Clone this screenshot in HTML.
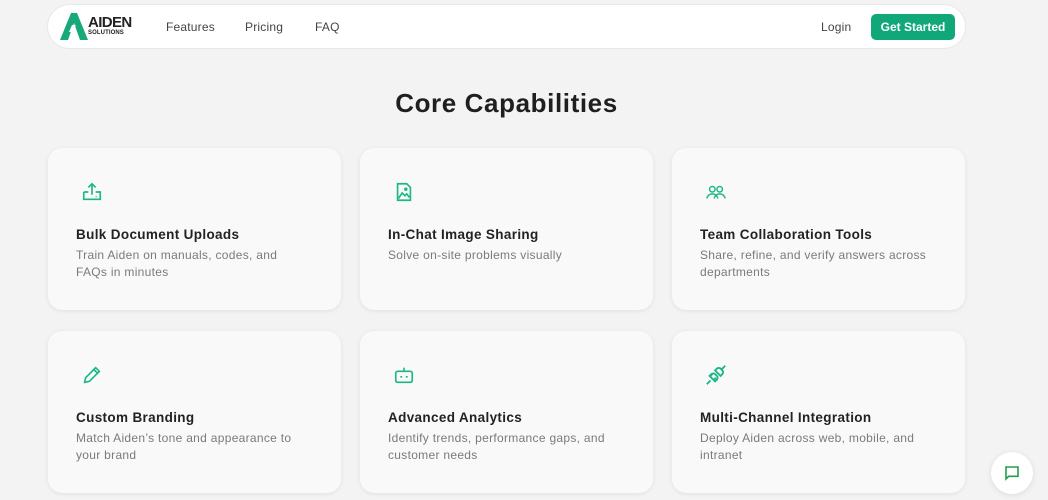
<!DOCTYPE html>
<html><head><meta charset="utf-8"><style>
*{margin:0;padding:0;box-sizing:border-box}
body{width:1048px;height:500px;overflow:hidden;background:#f3f3f3;font-family:"Liberation Sans",sans-serif;position:relative}
.nav{position:absolute;left:47px;top:4px;width:919px;height:45px;background:#fff;border-radius:23px;border:1px solid #e8e8e8}
.logo{position:absolute;left:11px;top:8px}
.lt{position:absolute;left:40px;top:10px;font-weight:bold;color:#222;line-height:1}
.lt b{display:block;font-size:15px;letter-spacing:-0.6px}
.lt i{display:block;font-style:normal;font-size:6px;margin-top:0px;letter-spacing:0.1px}
.nl{position:absolute;top:15px;font-size:12px;color:#444;letter-spacing:0.2px}
.btn{position:absolute;left:823px;top:9px;width:84px;height:26px;background:#10a878;border-radius:5px;color:#fff;font-size:12px;font-weight:bold;text-align:center;line-height:26px}
h1{position:absolute;top:88px;width:1013px;text-align:center;font-size:26px;font-weight:bold;color:#1f1f1f;letter-spacing:0.6px}
.card{position:absolute;width:293px;height:162px;background:#f9f9f9;border-radius:14px;box-shadow:0 1px 5px rgba(0,0,0,0.08)}
.card svg{position:absolute;left:33px;top:33px}
.card h3{position:absolute;left:28px;top:79px;font-size:13.5px;color:#222;font-weight:bold;letter-spacing:0.35px}
.card p{position:absolute;left:28px;top:99px;width:260px;font-size:12px;color:#7a7a7a;line-height:17px;letter-spacing:0.3px}
.chat{position:absolute;left:991px;top:452px;width:42px;height:42px;border-radius:50%;background:#fff;box-shadow:0 1px 6px rgba(0,0,0,0.1)}
</style></head><body>
<div class="nav">
<svg class="logo" width="30" height="28" viewBox="0 0 30 28"><path d="M12 0L18 0L29 27L21 27L15 10L9 27L1 27Z" fill="#17a97b"/><path d="M13 12l4 0-3 5 3 0-5 7 1-5-3 0z" fill="#fff"/></svg>
<div class="lt"><b>AIDEN</b><i>SOLUTIONS</i></div>
<div class="nl" style="left:118px">Features</div>
<div class="nl" style="left:197px">Pricing</div>
<div class="nl" style="left:267px">FAQ</div>
<div class="nl" style="left:773px">Login</div>
<div class="btn">Get Started</div>
</div>
<h1>Core Capabilities</h1>

<div class="card" style="left:48px;top:148px">
<svg width="22" height="22" viewBox="0 0 24 24" fill="none" stroke="#1cb787" stroke-width="1.8"><path d="M3 12v8h18v-8h-5M8 12H3M12 15V3M8 7l4-4 4 4M16 17h1"/></svg>
<h3>Bulk Document Uploads</h3><p>Train Aiden on manuals, codes, and<br>FAQs in minutes</p></div>
<div class="card" style="left:360px;top:148px">
<svg width="22" height="22" viewBox="0 0 24 24" fill="none" stroke="#1cb787" stroke-width="1.8"><path d="M5 3h10l4 4v14H5z"/><path d="M6 19l4-6 3 3 2-2 3 4"/><circle cx="14" cy="9" r="1"/></svg>
<h3>In-Chat Image Sharing</h3><p>Solve on-site problems visually</p></div>
<div class="card" style="left:672px;top:148px">
<svg width="22" height="22" viewBox="0 0 24 24" fill="none" stroke="#1cb787" stroke-width="1.6"><circle cx="8" cy="9" r="3"/><circle cx="16" cy="9" r="3"/><path d="M2 19c1-4 4-5 6-5s5 1 6 5M10 19c1-4 4-5 6-5s5 1 6 5"/></svg>
<h3>Team Collaboration Tools</h3><p>Share, refine, and verify answers across<br>departments</p></div>
<div class="card" style="left:48px;top:331px">
<svg width="22" height="22" viewBox="0 0 24 24" fill="none" stroke="#1cb787" stroke-width="1.8"><path d="M4 20l1-5L16 4l4 4L9 19z M14 6l4 4"/></svg>
<h3>Custom Branding</h3><p>Match Aiden’s tone and appearance to<br>your brand</p></div>
<div class="card" style="left:360px;top:331px">
<svg width="22" height="22" viewBox="0 0 24 24" fill="none" stroke="#1cb787" stroke-width="1.8"><rect x="3" y="8" width="18" height="12" rx="2"/><path d="M12 8V4"/><path d="M8 14h2M14 14h2"/></svg>
<h3>Advanced Analytics</h3><p>Identify trends, performance gaps, and<br>customer needs</p></div>
<div class="card" style="left:672px;top:331px">
<svg width="22" height="22" viewBox="0 0 24 24" fill="none" stroke="#1cb787" stroke-width="2"><path d="M2 22l4-4M22 2l-4 4"/><path d="M5 13l6 6 2-2c1-1 1-3 0-4l-2-2c-1-1-3-1-4 0z"/><path d="M11 7l6 6 2-2c1-1 1-3 0-4l-2-2c-1-1-3-1-4 0z"/><path d="M8 11l-2 2M12 15l-2 2"/></svg>
<h3>Multi-Channel Integration</h3><p>Deploy Aiden across web, mobile, and<br>intranet</p></div>
<div class="chat"><svg style="position:absolute;left:13px;top:13px" width="16" height="16" viewBox="0 0 24 24" fill="none" stroke="#22a04a" stroke-width="2.4"><path d="M3 3h18v14H7l-4 4z"/></svg></div>
</body></html>
